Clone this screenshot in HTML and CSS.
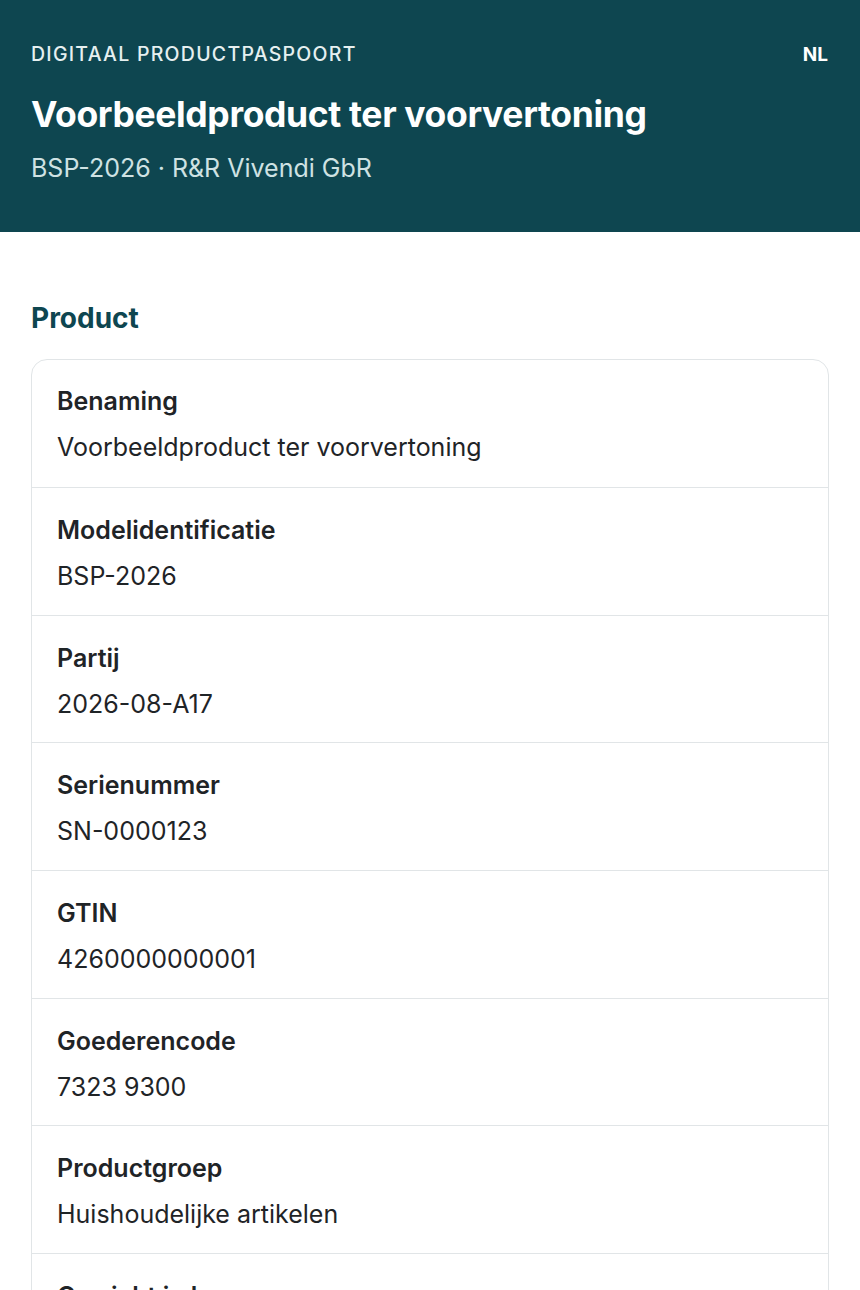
FILE: index.html
```html
<!DOCTYPE html>
<html lang="nl">
<head>
<meta charset="utf-8">
<title>Digitaal productpaspoort</title>
<link rel="stylesheet" href="styles.css">
</head>
<body>
<header class="hero">
  <div class="hero-top">
    <span class="eyebrow">DIGITAAL PRODUCTPASPOORT</span>
    <span class="lang">NL</span>
  </div>
  <h1 class="title">Voorbeeldproduct ter voorvertoning</h1>
  <p class="subtitle">BSP-2026 · R&amp;R Vivendi GbR</p>
</header>
<main class="content">
  <section class="section">
    <h2 class="section-title">Product</h2>
    <dl class="card">
      <div class="row"><dt class="label">Benaming</dt><dd class="value">Voorbeeldproduct ter voorvertoning</dd></div>
      <div class="row"><dt class="label">Modelidentificatie</dt><dd class="value">BSP-2026</dd></div>
      <div class="row"><dt class="label">Partij</dt><dd class="value">2026-08-A17</dd></div>
      <div class="row"><dt class="label">Serienummer</dt><dd class="value">SN-0000123</dd></div>
      <div class="row"><dt class="label">GTIN</dt><dd class="value">4260000000001</dd></div>
      <div class="row"><dt class="label">Goederencode</dt><dd class="value">7323 9300</dd></div>
      <div class="row"><dt class="label">Productgroep</dt><dd class="value">Huishoudelijke artikelen</dd></div>
      <div class="row"><dt class="label">Gewicht in kg</dt><dd class="value">0,85</dd></div>
    </dl>
  </section>
</main>
</body>
</html>
```
FILE: styles.css
```css
* { box-sizing: border-box; }
html, body { margin: 0; padding: 0; }
body {
  font-family: Inter, "Noto Sans", "Liberation Sans", sans-serif;
  background: #ffffff;
  color: #1f2427;
}
.hero {
  background: #0e4650;
  color: #ffffff;
  padding: 40px 31px 0;
  height: 232px;
}
.hero-top {
  display: flex;
  justify-content: space-between;
  align-items: center;
  height: 28px;
}
.eyebrow {
  font-size: 19.5px;
  letter-spacing: 0.065em;
  font-weight: 500;
  color: #e6f0f0;
}
.lang {
  font-size: 19px;
  font-weight: 700;
  margin-right: 1px;
}
.title {
  margin: 26px 0 0;
  font-size: 35.5px;
  line-height: 42px;
  font-weight: 700;
  letter-spacing: -0.01em;
}
.subtitle {
  margin: 16px 0 0;
  font-size: 25px;
  line-height: 32px;
  color: #cfe2e3;
}
.content {
  padding: 0 31px;
}
.section-title {
  margin: 0;
  padding-top: 68px;
  font-size: 28px;
  line-height: 36px;
  font-weight: 700;
  color: #0e4650;
}
.card {
  margin: 23px 0 0;
  border: 1px solid #e1e5e7;
  border-radius: 16px;
}
.row {
  padding: 26px 25px 23px;
  border-top: 1px solid #e1e5e7;
  display: flex;
  flex-direction: column;
  gap: 14px;
  height: 127.7px;
}
.row:first-child { border-top: 0; padding-top: 25px; height: 127px; }
.label {
  font-size: 25px;
  line-height: 32px;
  font-weight: 600;
  color: #1f2427;
}
.value {
  margin: 0;
  font-size: 25px;
  line-height: 32px;
  color: #1f2427;
}
```
